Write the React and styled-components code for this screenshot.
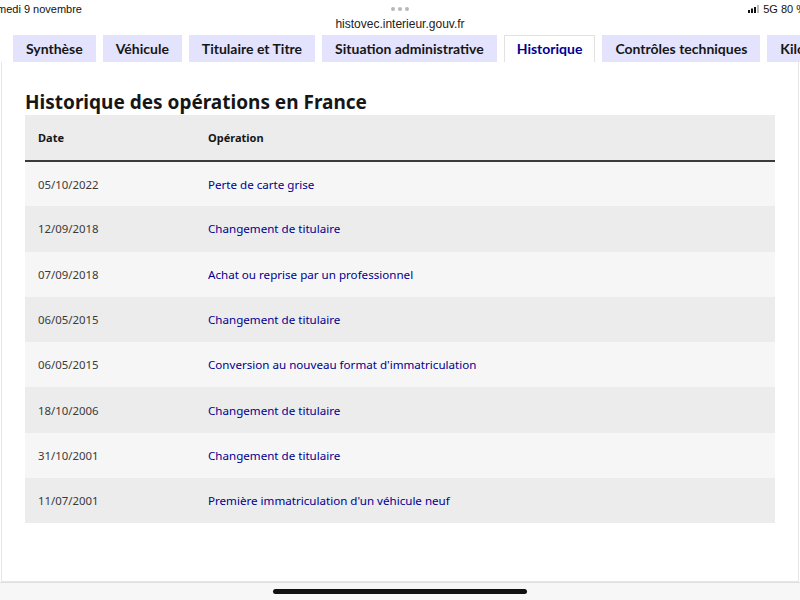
import React from "react";
import styled, { createGlobalStyle } from "styled-components";

const GlobalStyle = createGlobalStyle`
  html, body {
    margin: 0;
    padding: 0;
    background: #fff;
  }
  body {
    font-family: "Noto Sans", "Open Sans", sans-serif;
  }
  * {
    box-sizing: border-box;
  }
`;

const Screen = styled.div`
  width: 800px;
  height: 600px;
  display: flex;
  flex-direction: column;
  overflow: hidden;
  background: #fff;
`;

const StatusBar = styled.div`
  display: flex;
  flex-direction: column;
  height: 35px;
  font-family: "Liberation Sans", Arial, sans-serif;
  color: #111;
`;

const StatusRow = styled.div`
  display: grid;
  grid-template-columns: 1fr auto 1fr;
  align-items: center;
  height: 18px;
  font-size: 11px;
`;

const Clock = styled.span`
  margin-left: -3px;
  white-space: nowrap;
`;

const Dots = styled.span`
  display: flex;
  gap: 3px;
  span {
    width: 4px;
    height: 4px;
    border-radius: 50%;
    background: #b8b8b8;
  }
`;

const Signal = styled.span`
  display: flex;
  justify-content: flex-end;
  align-items: center;
  gap: 4px;
  margin-right: -6px;
  white-space: nowrap;
`;

const Url = styled.div`
  text-align: center;
  font-size: 12px;
  line-height: 12px;
  color: #222;
`;

const TabList = styled.div`
  display: flex;
  gap: 7px;
  height: 27px;
  padding-left: 13px;
  overflow: hidden;
  white-space: nowrap;
`;

const Tab = styled.div`
  flex: none;
  padding: 0 12px;
  line-height: 25px;
  font-family: Lato, "Noto Sans", sans-serif;
  font-size: 14px;
  font-weight: 700;
  color: ${(p) => (p.$active ? "#000091" : "#161616")};
  background: ${(p) => (p.$active ? "#fff" : "#e3e3fd")};
  border: 1px solid ${(p) => (p.$active ? "#e2e2e2" : "transparent")};
  border-bottom: none;
`;

const Panel = styled.section`
  flex: 1;
  margin: 0 1px;
  border: 1px solid #e6e6e6;
  border-top: none;
  padding: 29px 23px 0;
`;

const Heading = styled.h2`
  margin: 0 0 1px;
  font-size: 19px;
  line-height: 23px;
  font-weight: 700;
  color: #161616;
`;

const Table = styled.table`
  width: 100%;
  border-collapse: collapse;
  font-size: 11.6px;
`;

const Th = styled.th`
  height: 46px;
  padding: 0 13px;
  text-align: left;
  font-size: 11px;
  font-weight: 700;
  color: #161616;
  background: #ececec;
  border-bottom: 2px solid #3a3a3a;
  width: ${(p) => p.$width || "auto"};
`;

const Row = styled.tr`
  background: ${(p) => (p.$odd ? "#f6f6f6" : "#ececec")};
`;

const Td = styled.td`
  height: 45.3px;
  padding: 0 13px;
  font-size: ${(p) => (p.$link ? "11.6px" : "11.4px")};
  color: ${(p) => (p.$link ? "#000091" : "#3a3a3a")};
`;

const HomeBar = styled.div`
  height: 18px;
  display: flex;
  justify-content: center;
  align-items: center;
  background: #f7f7f7;
  border-top: 1px solid #e0e0e0;
  span {
    width: 254px;
    height: 5px;
    border-radius: 3px;
    background: #111;
  }
`;

const SignalIcon = () => (
  <svg width="11" height="8" viewBox="0 0 11 8">
    <rect x="0" y="5" width="2" height="3" fill="#111" />
    <rect x="3" y="3.5" width="2" height="4.5" fill="#111" />
    <rect x="6" y="2" width="2" height="6" fill="#111" />
    <rect x="9" y="0" width="2" height="8" fill="#bbb" />
  </svg>
);

const tabs = [
  "Synthèse",
  "Véhicule",
  "Titulaire et Titre",
  "Situation administrative",
  "Historique",
  "Contrôles techniques",
  "Kilométrage",
];

const operations = [
  ["05/10/2022", "Perte de carte grise"],
  ["12/09/2018", "Changement de titulaire"],
  ["07/09/2018", "Achat ou reprise par un professionnel"],
  ["06/05/2015", "Changement de titulaire"],
  ["06/05/2015", "Conversion au nouveau format d'immatriculation"],
  ["18/10/2006", "Changement de titulaire"],
  ["31/10/2001", "Changement de titulaire"],
  ["11/07/2001", "Première immatriculation d'un véhicule neuf"],
];

export default function App() {
  return (
    <>
      <GlobalStyle />
      <Screen>
        <StatusBar>
          <StatusRow>
            <Clock>medi 9 novembre</Clock>
            <Dots>
              <span />
              <span />
              <span />
            </Dots>
            <Signal>
              <SignalIcon />
              5G 80 %
            </Signal>
          </StatusRow>
          <Url>histovec.interieur.gouv.fr</Url>
        </StatusBar>

        <TabList>
          {tabs.map((t) => (
            <Tab key={t} $active={t === "Historique"}>
              {t}
            </Tab>
          ))}
        </TabList>

        <Panel>
          <Heading>Historique des opérations en France</Heading>
          <Table>
            <thead>
              <tr>
                <Th $width="170px">Date</Th>
                <Th>Opération</Th>
              </tr>
            </thead>
            <tbody>
              {operations.map(([date, label], i) => (
                <Row key={i} $odd={i % 2 === 0}>
                  <Td>{date}</Td>
                  <Td $link>{label}</Td>
                </Row>
              ))}
            </tbody>
          </Table>
        </Panel>

        <HomeBar>
          <span />
        </HomeBar>
      </Screen>
    </>
  );
}
